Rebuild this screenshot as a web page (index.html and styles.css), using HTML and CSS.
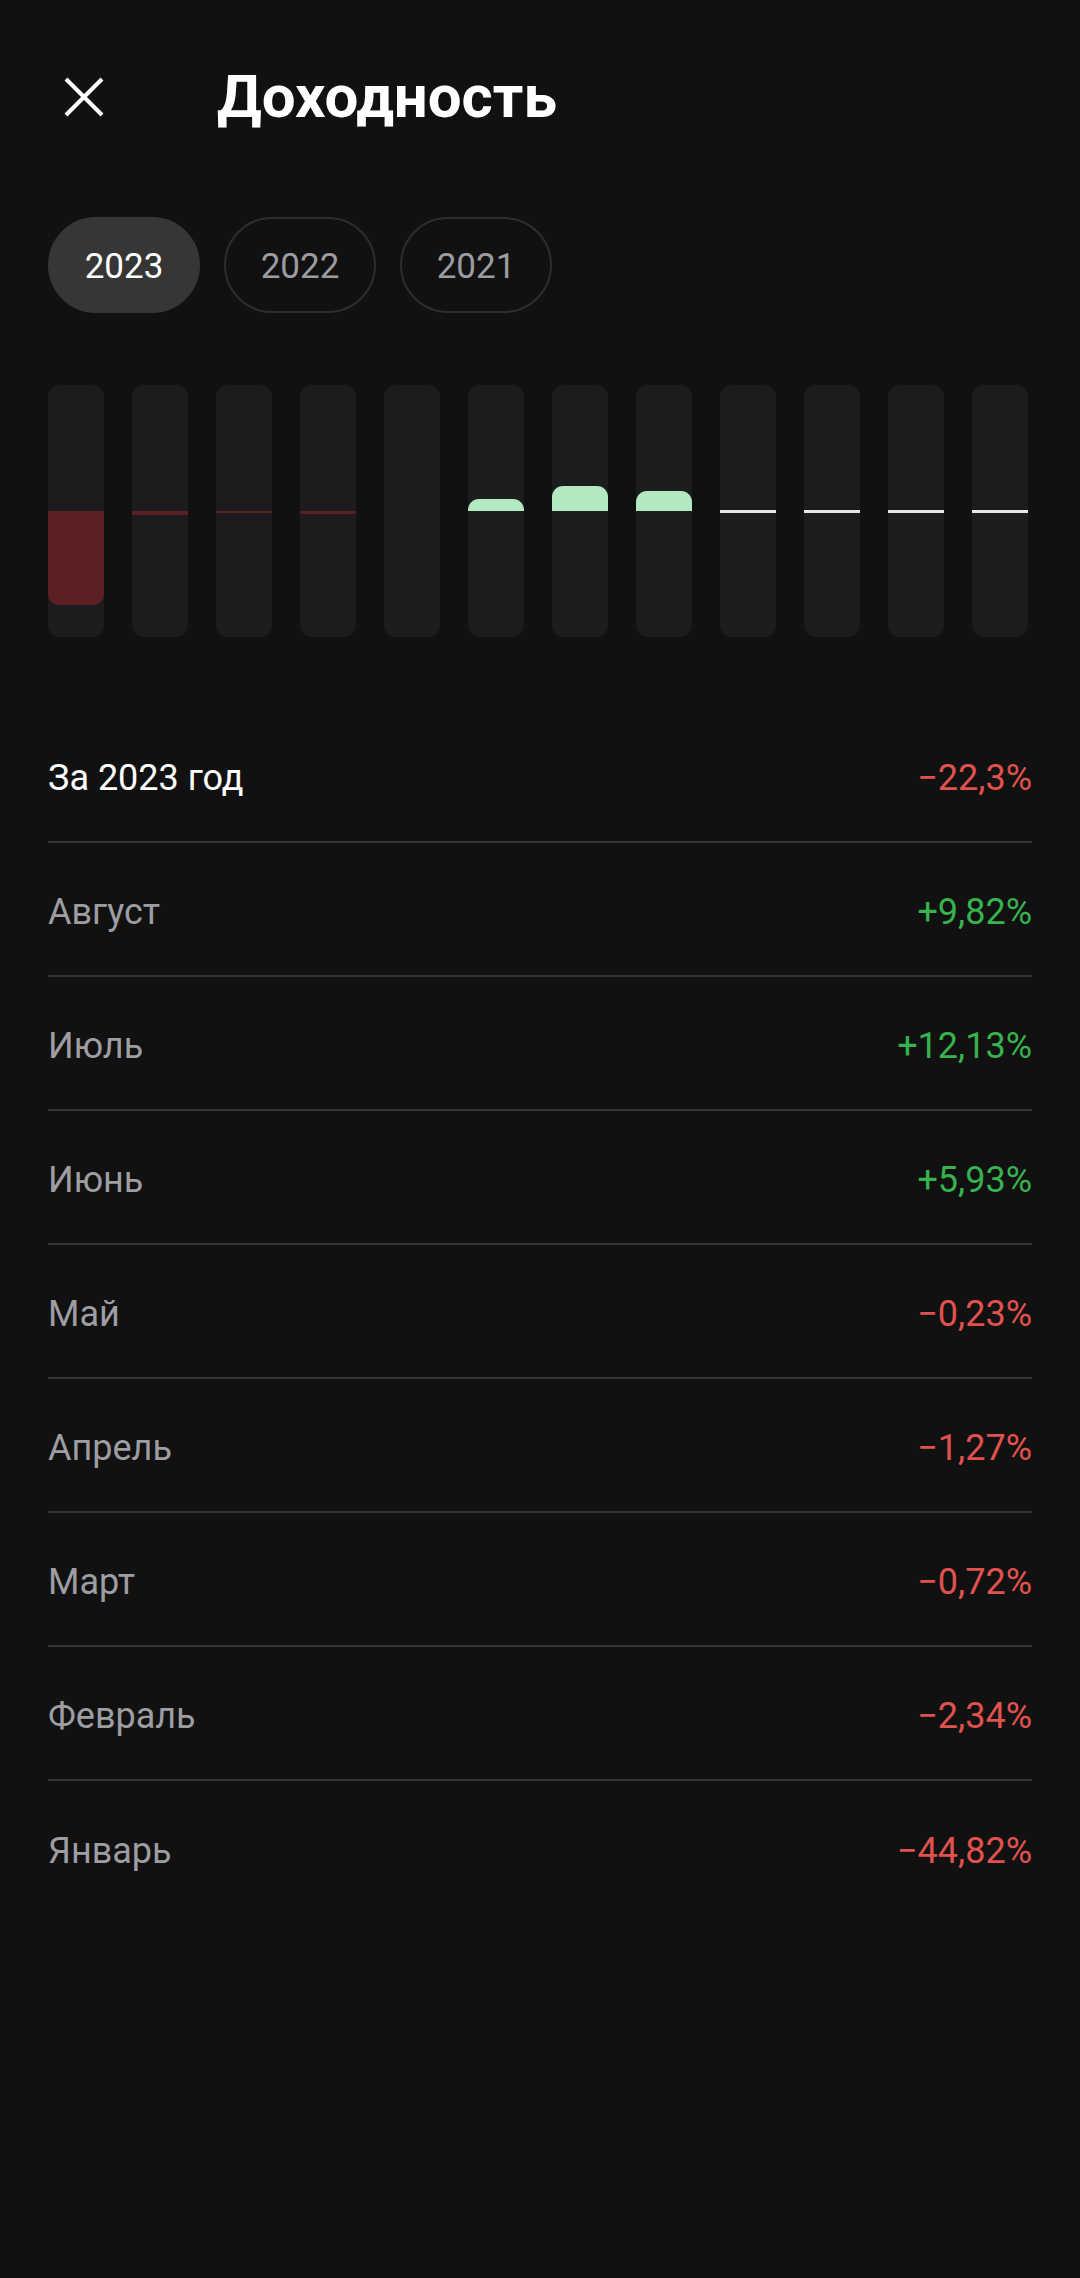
FILE: index.html
```html
<!DOCTYPE html>
<html lang="ru">
<head>
    <meta charset="UTF-8">
    <meta name="viewport" content="width=device-width, initial-scale=1.0">
    <title>Доходность</title>
    <link rel="stylesheet" href="styles.css">
</head>
<body>
    <div class="screen">
        <div class="header">
            <button class="close-btn" aria-label="Закрыть">
                <svg width="42" height="42" viewBox="0 0 42 42">
                    <path d="M3 3 L39 39 M39 3 L3 39" stroke="#fff" stroke-width="4" fill="none"/>
                </svg>
            </button>
            <h1 class="title">Доходность</h1>
        </div>

        <div class="chips">
            <button class="chip active">2023</button>
            <button class="chip">2022</button>
            <button class="chip">2021</button>
        </div>

        <!-- один столбик на месяц, верх - рост, низ - падение -->
        <div class="chart">
            <div class="bar">
                <div class="bar-top"></div>
                <div class="bar-bottom"><div class="fill neg" style="height: 94px"></div></div>
            </div>
            <div class="bar">
                <div class="bar-top"></div>
                <div class="bar-bottom"><div class="fill neg thin" style="height: 4px"></div></div>
            </div>
            <div class="bar">
                <div class="bar-top"></div>
                <div class="bar-bottom"><div class="fill neg thin" style="height: 1.5px"></div></div>
            </div>
            <div class="bar">
                <div class="bar-top"></div>
                <div class="bar-bottom"><div class="fill neg thin" style="height: 2.5px"></div></div>
            </div>
            <div class="bar">
                <div class="bar-top"></div>
                <div class="bar-bottom"></div>
            </div>
            <div class="bar">
                <div class="bar-top"><div class="fill pos" style="height: 12px"></div></div>
                <div class="bar-bottom"></div>
            </div>
            <div class="bar">
                <div class="bar-top"><div class="fill pos" style="height: 25px"></div></div>
                <div class="bar-bottom"></div>
            </div>
            <div class="bar">
                <div class="bar-top"><div class="fill pos" style="height: 20px"></div></div>
                <div class="bar-bottom"></div>
            </div>
            <div class="bar">
                <div class="bar-top"></div>
                <div class="bar-bottom"><div class="fill empty"></div></div>
            </div>
            <div class="bar">
                <div class="bar-top"></div>
                <div class="bar-bottom"><div class="fill empty"></div></div>
            </div>
            <div class="bar">
                <div class="bar-top"></div>
                <div class="bar-bottom"><div class="fill empty"></div></div>
            </div>
            <div class="bar">
                <div class="bar-top"></div>
                <div class="bar-bottom"><div class="fill empty"></div></div>
            </div>
        </div>

        <ul class="returns">
            <li class="row total">
                <span class="label">За 2023 год</span>
                <span class="value down">−22,3%</span>
            </li>
            <li class="row">
                <span class="label">Август</span>
                <span class="value up">+9,82%</span>
            </li>
            <li class="row">
                <span class="label">Июль</span>
                <span class="value up">+12,13%</span>
            </li>
            <li class="row">
                <span class="label">Июнь</span>
                <span class="value up">+5,93%</span>
            </li>
            <li class="row">
                <span class="label">Май</span>
                <span class="value down">−0,23%</span>
            </li>
            <li class="row">
                <span class="label">Апрель</span>
                <span class="value down">−1,27%</span>
            </li>
            <li class="row">
                <span class="label">Март</span>
                <span class="value down">−0,72%</span>
            </li>
            <li class="row">
                <span class="label">Февраль</span>
                <span class="value down">−2,34%</span>
            </li>
            <li class="row">
                <span class="label">Январь</span>
                <span class="value down">−44,82%</span>
            </li>
        </ul>
    </div>
</body>
</html>
```

FILE: styles.css
```css
body {
    margin: 0;
    padding: 0;
    background-color: #111111;
    font-family: Roboto, "Noto Sans", Arial, sans-serif;
    color: #fff;
}
.screen {
    min-height: 2278px;
    padding: 0 48px;
}
.header {
    display: flex;
    align-items: center;
    height: 98px;
    padding-top: 48px;
}
.close-btn {
    width: 42px;
    height: 42px;
    padding: 0;
    margin-left: 15px;
    border: none;
    background: none;
    cursor: pointer;
    display: flex;
}
.title {
    margin: 0 0 0 112px;
    font-size: 60px;
    font-weight: 700;
    line-height: 1;
    color: #fff;
}
.chips {
    display: flex;
    gap: 24px;
    margin-top: 71px;
}
.chip {
    width: 152px;
    height: 96px;
    border-radius: 48px;
    border: 2px solid #2e2e30;
    background: none;
    color: #9c9ca1;
    font-family: Roboto, Arial, sans-serif;
    font-size: 35px;
    padding: 2px 0 0;
    cursor: pointer;
}
.chip.active {
    background-color: #363636;
    border-color: #363636;
    color: #fff;
}
.chart {
    display: flex;
    gap: 28px;
    height: 252px;
    margin-top: 72px;
}
.bar {
    width: 56px;
    display: flex;
    flex-direction: column;
    background-color: #1c1c1e;
    border-radius: 12px;
    overflow: hidden;
}
.bar-top, .bar-bottom {
    height: 126px;
    display: flex;
    flex-direction: column;
}
.bar-top {
    justify-content: flex-end;
}
.fill.pos {
    background-color: #b3e9c0;
    border-radius: 11px 11px 0 0;
}
.fill.neg {
    background-color: #5c1f22;
    border-radius: 0 0 11px 11px;
}
.fill.neg.thin {
    border-radius: 0;
}
.fill.empty {
    height: 2px;
    margin-top: -1px;
    border-top: 1px solid #e6e6e6;
    background-color: #e6e6e6;
}
.returns {
    list-style: none;
    margin: 72px 0 0;
    padding: 0;
}
.row {
    display: flex;
    justify-content: space-between;
    align-items: center;
    box-sizing: border-box;
    height: 134px;
    padding-top: 5px;
    border-bottom: 2px solid #353537;
    font-size: 36px;
}
.row:last-child {
    border-bottom: none;
}
.label {
    color: #9d9da2;
}
.row.total .label {
    color: #fff;
}
.value.up {
    color: #37b24d;
}
.value.down {
    color: #e0524d;
}
```
